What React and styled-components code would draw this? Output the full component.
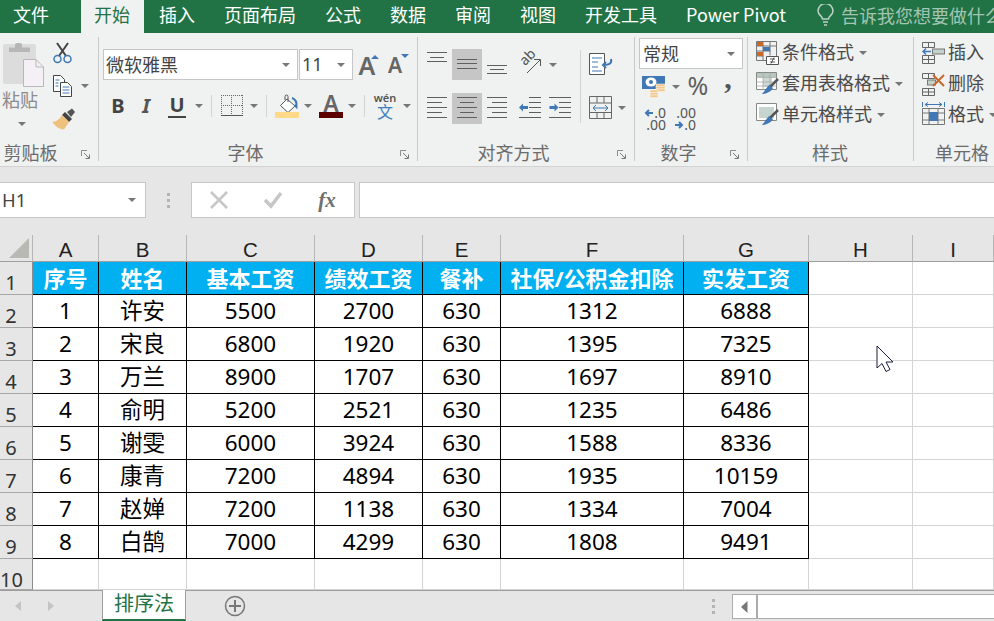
import React from "react";
import styled, { createGlobalStyle } from "styled-components";

const FONT = `"Noto Sans", "Noto Sans CJK SC", sans-serif`;
const CJK = `"Noto Sans CJK SC", "Noto Sans", sans-serif`;

const Global = createGlobalStyle`
  html, body { margin: 0; padding: 0; background: #fff; overflow: hidden; }
  * { box-sizing: border-box; }
`;

const Page = styled.div`
  position: relative; width: 994px; height: 621px; overflow: hidden;
  display: flex; flex-direction: column; font-family: ${FONT}; background: #fff;
`;

/* ---------- tab strip ---------- */
const TabStrip = styled.div`
  height: 33px; background: #217346; display: flex; gap: 1px; flex: none; overflow: hidden; white-space: nowrap;
`;
const Tab = styled.div`
  height: 33px; padding: 0 14px 3px; font: 18px/29px ${CJK}; color: #fff; flex: none;
`;
const FileTab = styled(Tab)` padding: 0 31px 3px 13px; `;
const ActiveTab = styled(Tab)` padding: 0 14px 3px 13px; background: #f0f1f1; color: #217346; `;
const TellMe = styled.div`
  display: flex; align-items: center; margin-left: 16px; gap: 7px; height: 30px; font: 18px/29px ${CJK}; color: #a3c5b1; flex: none;
`;

/* ---------- ribbon ---------- */
const Ribbon = styled.div`
  height: 134px; flex: none; padding-top: 4px; display: flex; background: #f0f1f1; border-bottom: 1px solid #d2d2d2; overflow: hidden;
`;
const Group = styled.div`
  width: ${(p) => p.$w}px; flex: ${(p) => (p.$w ? "none" : "1")}; height: 124px; display: flex; flex-direction: column;
  border-right: ${(p) => (p.$last ? "none" : "1px solid #c9c9c9")};
`;
const GroupBody = styled.div`
  flex: 1; min-height: 0; display: flex;
`;
const LabelRow = styled.div`
  height: 16px; display: grid; grid-template-columns: 1fr auto; align-items: start; padding-right: 7px;
`;
const GroupLabel = styled.div`
  font: 18px/14px ${CJK}; color: #6b6b6b; white-space: nowrap; text-align: ${(p) => p.$align || "center"};
  padding-left: ${(p) => p.$pl || 0}px; padding-right: ${(p) => p.$pr || 0}px;
`;
const LauncherWrap = styled.div` width: 10px; height: 10px; display: flex; margin-top: 5px; `;

const Caret = styled.span`
  display: block; flex: none; width: 0; height: 0;
  border-left: 4px solid transparent; border-right: 4px solid transparent; border-top: 4px solid #777;
  margin-left: ${(p) => p.$ml || 0}px;
`;
const Column = styled.div`
  display: flex; flex-direction: column; width: ${(p) => p.$w}px; padding-top: ${(p) => p.$pt || 0}px;
  padding-left: ${(p) => p.$pl || 0}px; gap: ${(p) => p.$gap || 0}px; flex: none;
`;
const Row = styled.div`
  display: flex; align-items: center; height: ${(p) => p.$h}px; margin-top: ${(p) => p.$mt || 0}px;
  padding-left: ${(p) => p.$pl || 0}px; flex: none;
`;
const Slot = styled.div`
  width: ${(p) => p.$w}px; height: ${(p) => p.$h || 24}px; margin-left: ${(p) => p.$ml || 0}px; flex: none;
  display: flex; align-items: center; justify-content: center; position: relative;
  background: ${(p) => (p.$on ? "#c6c6c6" : "transparent")};
`;
const PasteLabel = styled.div`
  font: 18px/16px ${CJK}; color: #8b8b8b; margin: 3px 0 0 -1px; height: 20px;
`;
const PasteCaret = styled.div` margin: 11px 0 0 15px; `;
const ToolRow = styled.div` display: flex; height: 22px; align-items: center; `;

const Combo = styled.div`
  height: ${(p) => p.$h}px; width: ${(p) => p.$w}px; background: #fff; border: 1px solid #c6c6c6; flex: none;
  display: flex; align-items: center; padding: 0 7px 0 ${(p) => p.$pl ?? 2}px; margin-left: ${(p) => p.$ml || 0}px;
  font: 18px/${(p) => p.$h - 6}px ${CJK}; color: #444;
`;
const ComboText = styled.span` flex: 1; white-space: nowrap; `;
const SizeText = styled(ComboText)` font-family: ${FONT}; `;

const LetterA = styled.span`
  font: 600 ${(p) => p.$s}px/24px "Noto Sans", sans-serif; color: #666;
`;
const GlyphB = styled.span` font: bold 20px/24px "Noto Sans", sans-serif; color: #444; `;
const GlyphI = styled.span` font: italic bold 20px/24px "Noto Sans", sans-serif; color: #555; `;
const GlyphU = styled.span`
  font: bold 20px/20px "Noto Sans", sans-serif; color: #444; border-bottom: 2px solid #444; height: 23px; padding: 0 1px;
`;
const Tip = styled.span`
  position: absolute; right: ${(p) => p.$r}px; top: ${(p) => p.$t}px; width: 0; height: 0;
  border-left: 4px solid transparent; border-right: 4px solid transparent;
  ${(p) => (p.$up ? "border-bottom: 4px solid #3f78b5;" : "border-top: 4px solid #3f78b5;")}
`;
const ColorA = styled.div`
  display: flex; flex-direction: column; align-items: center; width: 24px; height: 24px;
  font: 600 23px/18px "Noto Sans", sans-serif; color: #666;
`;
const ColorBar = styled.span` display: block; width: 24px; height: 6px; margin-top: auto; background: #5c0000; `;
const Wen = styled.div`
  display: flex; flex-direction: column; align-items: center; color: #555; font: 600 11px/11px "Noto Sans", sans-serif;
`;
const WenZi = styled.span` font: 16px/17px ${CJK}; color: #3f7fbf; `;
const Divider = styled.div`
  width: 1px; height: ${(p) => p.$h}px; background: #d3d3d3; margin-left: ${(p) => p.$ml || 0}px; margin-top: ${(p) => p.$mt || 0}px; flex: none;
`;
const AbText = styled.span`
  position: absolute; left: 4px; top: 0; font: 14px/16px "Noto Sans", sans-serif; color: #555; transform: rotate(-45deg);
`;
const Percent = styled.span` font: 25px/20px "Noto Sans", sans-serif; color: #5f5f5f; margin: -4px 0 0 -4px; `;
const Comma = styled.span` font: bold 30px/24px "Liberation Serif", serif; color: #555; margin-top: -18px; `;
const DecBtn = styled.div`
  width: 24px; display: flex; flex-direction: column; align-items: flex-end; margin-left: ${(p) => p.$ml || 0}px;
  font: 14px/12px "Noto Sans", sans-serif; color: #555; flex: none;
`;
const DecLine = styled.span` display: flex; align-items: center; gap: 0; height: 12px; `;
const StyleRow = styled.div`
  display: flex; align-items: center; height: 31px; padding-left: ${(p) => p.$pl}px; font: 18px/27px ${CJK}; color: #4a4a4a; white-space: nowrap;
`;
const StyleText = styled.span` margin: 0 0 2px 3px; `;

/* ---------- formula bar ---------- */
const FormulaBar = styled.div`
  height: 68px; flex: none; display: flex; padding-top: 15px; background: #e6e6e6; align-items: flex-start;
`;
const NameBox = styled.div`
  width: 146px; height: 36px; background: #fff; border: 1px solid #c6c6c6; border-left: none; flex: none;
  display: flex; align-items: center; padding: 0 9px 0 2px; font: 18.5px/34px "Noto Sans", sans-serif; color: #444;
`;
const NameText = styled.span` flex: 1; `;
const GripDots = styled.div`
  width: ${(p) => p.$w}px; height: ${(p) => p.$h}px; flex: none; display: flex; flex-direction: column; align-items: center; justify-content: center; gap: 3px;
  & > i { display: block; width: 3px; height: 3px; background: #b4b4b4; }
`;
const FxBox = styled.div`
  width: 164px; height: 36px; background: #fff; border: 1px solid #c6c6c6; flex: none; display: flex; align-items: center;
`;
const FxSlot = styled.div`
  width: 54px; height: 34px; flex: none; display: flex; align-items: center; justify-content: center;
`;
const FxText = styled.span` font: italic bold 21px/30px "Liberation Serif", serif; color: #707070; `;
const FormulaInput = styled.div`
  flex: 1; height: 36px; margin-left: 4px; background: #fff; border: 1px solid #c6c6c6; border-right: none;
`;

/* ---------- sheet ---------- */
const Sheet = styled.div`
  flex: none; height: 355px; display: grid;
  grid-template-columns: 33px 66px 88px 128px 108px 78px 183px 125px 104px 81px;
  grid-template-rows: 27px repeat(9, 33px) 31px; overflow: hidden;
`;
const Corner = styled.div`
  background: #e6e6e6; border-right: 1px solid #b6b6b6; border-bottom: 1px solid #9e9e9e;
  display: flex; align-items: flex-end; justify-content: flex-end; padding: 0 3px 3px 0;
`;
const ColHead = styled.div`
  background: #e6e6e6; border-right: 1px solid #b6b6b6; border-bottom: 1px solid #9e9e9e; padding-top: 3px;
  text-align: center; font: 20.5px/24px "Liberation Sans", sans-serif; color: #222;
`;
const RowHead = styled.div`
  background: #e6e6e6; border-right: 1px solid #8c8c8c; border-bottom: 1px solid #a8a8a8;
  padding: 9px 10px 0 0; text-align: center; font: 20px/23px "Noto Sans", sans-serif; color: #333; white-space: nowrap;
`;
const HeadCell = styled.div`
  background: #00b0f0; color: #fff; border-right: 1px solid #000; border-bottom: 1px solid #000;
  display: flex; align-items: center; justify-content: center; font: bold 22px/30px ${FONT}; white-space: nowrap;
`;
const DataCell = styled.div`
  border-right: 1px solid #000; border-bottom: 1px solid #000; background: #fff; padding-bottom: 1px;
  display: flex; align-items: center; justify-content: center; font: 22.500px/30px ${FONT}; color: #000;
`;
const EmptyCell = styled.div`
  background: #fff; border-right: 1px solid #d4d4d4; border-bottom: 1px solid #d4d4d4;
`;

/* ---------- sheet tabs ---------- */
const SheetBar = styled.div`
  flex: none; height: 31px; display: flex; align-items: flex-start; background: #e6e6e6; border-top: 1px solid #9e9e9e;
`;
const NavSlot = styled.div`
  width: ${(p) => p.$w}px; height: 30px; flex: none; display: flex; align-items: center; justify-content: center;
`;
const SheetTab = styled.div`
  width: 84px; height: 31px; margin-top: -1px; flex: none; background: #fff; text-align: center;
  border-left: 1px solid #9e9e9e; border-right: 1px solid #9e9e9e; border-bottom: 2px solid #217346;
  font: 20px/26px ${CJK}; color: #217346;
`;
const Spacer = styled.div` flex: 1; `;
const ScrollBtn = styled.div`
  width: 25px; height: 25px; margin-top: 3px; flex: none; background: #fff; border: 1px solid #ababab;
  display: flex; align-items: center; justify-content: center;
`;
const ScrollTrack = styled.div`
  width: 237px; height: 25px; margin-top: 3px; flex: none; background: #fff; border: 1px solid #ababab; border-right: none;
`;
const Cursor = styled.svg` position: absolute; left: 876px; top: 345px; `;

/* ---------- icons ---------- */
const Launcher = () => (
  <LauncherWrap>
    <svg width="10" height="10" viewBox="0 0 10 10" fill="none">
      <path d="M.5 6V.5H6" stroke="#8c8c8c" />
      <path d="M3 3l5 5M8.5 4.5v4h-4" stroke="#777" />
    </svg>
  </LauncherWrap>
);
const PasteIcon = () => (
  <svg width="41" height="46" viewBox="0 0 41 46">
    <rect x="0" y="2" width="33" height="40" rx="2" fill="#dcdcdc" />
    <path d="M6 10V5.5h6V3a2 2 0 0 1 2-2h3a2 2 0 0 1 2 2v2.500h8V10z" fill="#b7b7b7" />
    <path d="M20.500 17.500H33L40.500 25v19.500h-20z" fill="#f5f0f6" stroke="#b8b8b8" />
    <path d="M33 17.500V25h7.500" fill="none" stroke="#b8b8b8" />
  </svg>
);
const CutIcon = () => (
  <svg width="22" height="22" viewBox="0 0 22 22" fill="none">
    <path d="M5 1l9 13M16 1L7 14" stroke="#444" strokeWidth="2" />
    <circle cx="5.500" cy="17" r="3.500" stroke="#3f78b5" strokeWidth="1.500" />
    <circle cx="15.500" cy="17" r="3.500" stroke="#3f78b5" strokeWidth="1.500" />
  </svg>
);
const CopyIcon = () => (
  <svg width="22" height="22" viewBox="0 0 22 22" fill="none">
    <path d="M1.500.500h7l4 4v12h-11z" fill="#fff" stroke="#444" />
    <path d="M8.500 7.500h7l4 4v10h-11z" fill="#fff" stroke="#444" />
    <path d="M3.500 5h4M3.500 8h3M3.500 11h3M10.500 12h7M10.500 15h7M10.500 18h7" stroke="#3f78b5" />
  </svg>
);
const BrushIcon = () => (
  <svg width="24" height="22" viewBox="0 0 24 22">
    <path d="M15 4l5-3.500 3 3.500-4 5z" fill="#555" />
    <path d="M13 4l7 7-3 3-7-7z" fill="#444" />
    <path d="M10 7l7 7-5 7.500c-4 0-9-3-12-8 4 1 7-2 10-6.500z" fill="#eec17e" />
  </svg>
);
const BordersIcon = () => (
  <svg width="22" height="22" viewBox="0 0 22 22" fill="none">
    <path d="M0 .5h22M0 10.500h22M.5 0v20M10.500 0v20M21.500 0v20" stroke="#666" strokeDasharray="1 1" />
    <path d="M0 20.500h22" stroke="#555" />
  </svg>
);
const FillIcon = () => (
  <svg width="24" height="24" viewBox="0 0 24 24" fill="none">
    <path d="M12 5l8 7-7 6.500-7.500-7z" fill="#fff" stroke="#555" />
    <path d="M10 6V2.500a1.500 1.500 0 0 1 3 0V8" stroke="#555" />
    <path d="M17 4c3 1 5 4 4.500 9l-2-2" stroke="#3f78b5" strokeWidth="2" />
    <rect x="0" y="18" width="24" height="6" fill="#ffd98a" />
  </svg>
);
const Lines = ({ lines, arrow }) => (
  <svg width="30" height="31" viewBox="0 0 30 31" fill="none">
    {lines.map(([a, b, y], i) => (
      <path key={i} d={`M${a} ${y + 0.5}H${b}`} stroke="#5f5f5f" />
    ))}
    {arrow === "left" && <path d="M4 14.500l4-4v2.500h5v3H8v2.500z" fill="#3f78b5" />}
    {arrow === "right" && <path d="M13.500 14.500l-4-4v2.500h-5v3h5v2.500z" fill="#3f78b5" />}
  </svg>
);
const rowLeft = [[5, 25, 4], [5, 20, 9], [5, 25, 14], [5, 20, 19], [5, 25, 24]];
const rowCenter = [[5, 25, 4], [8, 22, 9], [5, 25, 14], [8, 22, 19], [5, 25, 24]];
const rowRight = [[5, 25, 4], [10, 25, 9], [5, 25, 14], [10, 25, 19], [5, 25, 24]];
const outdent = [[14, 26, 4], [14, 26, 9], [14, 26, 14], [14, 26, 19], [4, 26, 24]];
const indent = [[4, 26, 4], [14, 26, 9], [14, 26, 14], [14, 26, 19], [4, 26, 24]];

const OrientArrow = () => (
  <svg width="30" height="31" viewBox="0 0 30 31" fill="none">
    <path d="M12 24L25 11M19 10.500h6.500V17" stroke="#555" />
  </svg>
);
const WrapIcon = () => (
  <svg width="24" height="24" viewBox="0 0 24 24" fill="none">
    <path d="M.5.500h15v21H.5z" fill="#fff" stroke="#555" />
    <path d="M3 5h10M3 9h6M3 14h6M3 18h10" stroke="#3f78b5" />
    <path d="M22 6c1 4-1 6-8 6M17 9l-3 3 3 3" stroke="#3f78b5" strokeWidth="2" />
  </svg>
);
const MergeIcon = () => (
  <svg width="23" height="24" viewBox="0 0 23 24" fill="none">
    <path d="M.5.500h22v22H.5zM.5 7h22M.5 16.500h22M8 .5V7M15 .5V7M8 16.500v6M15 16.500v6" stroke="#666" />
    <path d="M4 12h15M7 9l-3 3 3 3M16 9l3 3-3 3" stroke="#3f78b5" />
  </svg>
);
const MoneyIcon = () => (
  <svg width="24" height="24" viewBox="0 0 24 24">
    <rect x="0" y="1" width="23" height="13" fill="#3f78b5" />
    <ellipse cx="9" cy="7" rx="5.500" ry="4.500" fill="#fff" />
    <circle cx="9" cy="7" r="2" fill="#3f78b5" />
    <g fill="#f1c88a" stroke="#f7f7f7" strokeWidth=".5">
      <rect x="14" y="9" width="9" height="2.500" />
      <rect x="14" y="11.500" width="9" height="2.500" />
      <rect x="14" y="14" width="9" height="2.500" />
      <rect x="8" y="15" width="8" height="2.500" />
      <rect x="8" y="17.500" width="8" height="2.500" />
      <rect x="8" y="20" width="8" height="2.500" />
    </g>
  </svg>
);
const DecArrow = ({ dir }) => (
  <svg width="10" height="10" viewBox="0 0 10 10" fill="none">
    <path d={dir === "left" ? "M9 5H2M5 2L2 5l3 3" : "M1 5h7M5 2l3 3-3 3"} stroke="#3f78b5" strokeWidth="2" />
  </svg>
);
const CondIcon = () => (
  <svg width="23" height="24" viewBox="0 0 23 24" fill="none">
    <path d="M.5.500h20v19H.5zM7 .5v19M14 .5v14M.5 5h20M.5 10h14M.5 15h7" stroke="#777" />
    <rect x="1" y="1" width="6" height="4" fill="#c8682b" />
    <rect x="7" y="6" width="7" height="4" fill="#3f78b5" />
    <rect x="1" y="11" width="6" height="4" fill="#c8682b" />
    <path d="M10.500 15.500h12v8h-12z" fill="#fff" stroke="#555" />
    <path d="M14 18h5M14 21h5M18 16.500l-3 6" stroke="#333" strokeWidth=".8" />
  </svg>
);
const TableStyleIcon = () => (
  <svg width="23" height="24" viewBox="0 0 23 24" fill="none">
    <path d="M.5.500h20v17H.5z" stroke="#888" fill="#fff" />
    <rect x="1" y="1" width="19" height="4" fill="#b5c7bf" />
    <rect x="7" y="5" width="9" height="10" fill="#cbdad3" />
    <path d="M7 .5v17M14 .5v17M.5 5.500h20M.5 10h20M.5 14h20" stroke="#aaa" strokeWidth=".8" />
    <path d="M22 7l-8 8" stroke="#555" strokeWidth="2.500" />
    <path d="M13 13l4 3c-2 4-8 6-11 6 2-2 4-6 7-9z" fill="#3f78b5" />
  </svg>
);
const CellStyleIcon = () => (
  <svg width="23" height="24" viewBox="0 0 23 24" fill="none">
    <path d="M.5.500h20v17H.5z" stroke="#888" fill="#fff" />
    <rect x="3" y="4" width="15" height="11" fill="#c6d6cf" />
    <path d="M22 7l-8 8" stroke="#555" strokeWidth="2.500" />
    <path d="M13 13l4 3c-2 4-8 6-11 6 2-2 4-6 7-9z" fill="#3f78b5" />
  </svg>
);
const InsertIcon = () => (
  <svg width="23" height="24" viewBox="0 0 23 24" fill="none">
    <path d="M.5 1.500h12v5H.5zM6.500 1.500v5M.5 14.500h12v8H.5zM.5 18.500h12M6.500 14.500v8" stroke="#666" />
    <rect x="10.500" y="8" width="12" height="5" fill="#c3d3cc" stroke="#777" />
    <path d="M9 10.500H1M4 7.500l-3 3 3 3" stroke="#3f78b5" strokeWidth="1.500" />
  </svg>
);
const DeleteIcon = () => (
  <svg width="23" height="24" viewBox="0 0 23 24" fill="none">
    <path d="M.5 1.500h12v5H.5zM6.500 1.500v5M.5 16.500h12v7H.5zM.5 20h12M6.500 16.500v7" stroke="#666" />
    <rect x="5.500" y="8" width="8" height="5" fill="#c3d3cc" stroke="#777" />
    <path d="M11 3l11 11M22 3L11 14" stroke="#c8682b" strokeWidth="2" />
  </svg>
);
const FormatIcon = () => (
  <svg width="23" height="26" viewBox="0 0 23 26" fill="none">
    <path d="M.5 0v5M22.500 0v5M3 2.500h17M6 .5l-3 2 3 2M17 .5l3 2-3 2" stroke="#3f78b5" />
    <path d="M.5 6.500h22v16H.5zM7 6.500v16M16 6.500v16M.5 11h22M.5 18h22" stroke="#777" />
    <rect x="7" y="10" width="9" height="9" fill="#3f78b5" />
  </svg>
);
const Bulb = () => (
  <svg width="17" height="22" viewBox="0 0 17 22" fill="none" stroke="#b9d3c4" strokeWidth="1.500">
    <path d="M5.500 15c0-3-4.500-4-4.500-8a7.500 7.500 0 0 1 15 0c0 4-4.500 5-4.500 8z" />
    <path d="M6 18h5M7 21h3" />
  </svg>
);

const data = [
  ["1", "许安", "5500", "2700", "630", "1312", "6888"],
  ["2", "宋良", "6800", "1920", "630", "1395", "7325"],
  ["3", "万兰", "8900", "1707", "630", "1697", "8910"],
  ["4", "俞明", "5200", "2521", "630", "1235", "6486"],
  ["5", "谢雯", "6000", "3924", "630", "1588", "8336"],
  ["6", "康青", "7200", "4894", "630", "1935", "10159"],
  ["7", "赵婵", "7200", "1138", "630", "1334", "7004"],
  ["8", "白鹄", "7000", "4299", "630", "1808", "9491"],
];
const heads = ["序号", "姓名", "基本工资", "绩效工资", "餐补", "社保/公积金扣除", "实发工资"];
const cols = ["A", "B", "C", "D", "E", "F", "G", "H", "I"];

export default function App() {
  return (
    <Page>
      <Global />
      <TabStrip>
        <FileTab>文件</FileTab>
        <ActiveTab>开始</ActiveTab>
        <Tab>插入</Tab>
        <Tab>页面布局</Tab>
        <Tab>公式</Tab>
        <Tab>数据</Tab>
        <Tab>审阅</Tab>
        <Tab>视图</Tab>
        <Tab>开发工具</Tab>
        <Tab>Power Pivot</Tab>
        <TellMe>
          <Bulb />
          告诉我您想要做什么
        </TellMe>
      </TabStrip>

      <Ribbon>
        <Group $w={99}>
          <GroupBody>
            <Column $w={52} $pl={3} $pt={5}>
              <PasteIcon />
              <PasteLabel>粘贴</PasteLabel>
              <PasteCaret><Caret /></PasteCaret>
            </Column>
            <Column $w={46} $pt={5} $gap={11}>
              <ToolRow><CutIcon /></ToolRow>
              <ToolRow><CopyIcon /><Caret $ml={7} /></ToolRow>
              <ToolRow><BrushIcon /></ToolRow>
            </Column>
          </GroupBody>
          <LabelRow>
            <GroupLabel $pr={20}>剪贴板</GroupLabel>
            <Launcher />
          </LabelRow>
        </Group>

        <Group $w={319}>
          <GroupBody>
            <Column $w={318} $pt={12}>
              <Row $h={31} $pl={4}>
                <Combo $w={195} $h={31}><ComboText>微软雅黑</ComboText><Caret /></Combo>
                <Combo $w={54} $h={31} $ml={1}><SizeText>11</SizeText><Caret /></Combo>
                <Slot $w={24} $ml={2}>
                  <LetterA $s={25}>A</LetterA><Tip $up $r={0} $t={2} />
                </Slot>
                <Slot $w={22} $ml={5}>
                  <LetterA $s={21}>A</LetterA><Tip $r={-3} $t={1} />
                </Slot>
              </Row>
              <Row $h={24} $mt={14} $pl={6}>
                <Slot $w={26}><GlyphB>B</GlyphB></Slot>
                <Slot $w={26} $ml={2}><GlyphI>I</GlyphI></Slot>
                <Slot $w={26} $ml={5}><GlyphU>U</GlyphU></Slot>
                <Caret $ml={5} />
                <Divider $h={22} $ml={8} />
                <Slot $w={22} $ml={9}><BordersIcon /></Slot>
                <Caret $ml={7} />
                <Divider $h={22} $ml={8} />
                <Slot $w={24} $ml={8}><FillIcon /></Slot>
                <Caret $ml={5} />
                <Slot $w={24} $ml={7}>
                  <ColorA>A<ColorBar /></ColorA>
                </Slot>
                <Caret $ml={5} />
                <Divider $h={22} $ml={8} />
                <Slot $w={24} $ml={8}>
                  <Wen>wén<WenZi>文</WenZi></Wen>
                </Slot>
                <Caret $ml={6} />
              </Row>
            </Column>
          </GroupBody>
          <LabelRow>
            <GroupLabel $pr={8}>字体</GroupLabel>
            <Launcher />
          </LabelRow>
        </Group>

        <Group $w={217}>
          <GroupBody>
            <Column $w={162} $pt={12} $pl={4}>
              <Row $h={31}>
                <Slot $w={30} $h={31}><Lines lines={[[5, 25, 3], [8, 22, 8], [5, 25, 12]]} /></Slot>
                <Slot $w={30} $h={31} $on><Lines lines={[[5, 25, 10], [5, 25, 14], [5, 25, 19]]} /></Slot>
                <Slot $w={30} $h={31}><Lines lines={[[5, 25, 16], [8, 22, 20], [5, 25, 24]]} /></Slot>
                <Slot $w={30} $h={31} $ml={3}><AbText>ab</AbText><OrientArrow /></Slot>
                <Caret $ml={4} />
              </Row>
              <Row $h={31} $mt={13}>
                <Slot $w={30} $h={31}><Lines lines={rowLeft} /></Slot>
                <Slot $w={30} $h={31} $on><Lines lines={rowCenter} /></Slot>
                <Slot $w={30} $h={31}><Lines lines={rowRight} /></Slot>
                <Slot $w={30} $h={31} $ml={3}><Lines lines={outdent} arrow="left" /></Slot>
                <Slot $w={30} $h={31}><Lines lines={indent} arrow="right" /></Slot>
              </Row>
            </Column>
            <Divider $h={73} $mt={13} />
            <Column $w={50} $pt={16} $pl={8}>
              <Row $h={24}><Slot $w={24}><WrapIcon /></Slot></Row>
              <Row $h={24} $mt={19}>
                <Slot $w={23}><MergeIcon /></Slot>
                <Caret $ml={6} />
              </Row>
            </Column>
          </GroupBody>
          <LabelRow>
            <GroupLabel $pr={8}>对齐方式</GroupLabel>
            <Launcher />
          </LabelRow>
        </Group>

        <Group $w={113}>
          <GroupBody>
            <Column $w={112} $pt={1} $pl={4}>
              <Combo $w={104} $h={31} $pl={3}><ComboText>常规</ComboText><Caret /></Combo>
              <Row $h={24} $mt={6} $pl={3}>
                <Slot $w={24}><MoneyIcon /></Slot>
                <Caret $ml={6} />
                <Slot $w={26} $ml={7}><Percent>%</Percent></Slot>
                <Slot $w={12} $ml={9}><Comma>,</Comma></Slot>
              </Row>
              <Row $h={24} $mt={8} $pl={3}>
                <DecBtn>
                  <DecLine><DecArrow dir="left" />.0</DecLine>
                  <DecLine>.00</DecLine>
                </DecBtn>
                <DecBtn $ml={6}>
                  <DecLine>.00</DecLine>
                  <DecLine><DecArrow dir="right" />.0</DecLine>
                </DecBtn>
              </Row>
            </Column>
          </GroupBody>
          <LabelRow>
            <GroupLabel $pr={8}>数字</GroupLabel>
            <Launcher />
          </LabelRow>
        </Group>

        <Group $w={166}>
          <GroupBody>
            <Column $w={165}>
              <StyleRow $pl={8}><CondIcon /><StyleText>条件格式</StyleText><Caret $ml={5} /></StyleRow>
              <StyleRow $pl={8}><TableStyleIcon /><StyleText>套用表格格式</StyleText><Caret $ml={5} /></StyleRow>
              <StyleRow $pl={8}><CellStyleIcon /><StyleText>单元格样式</StyleText><Caret $ml={5} /></StyleRow>
            </Column>
          </GroupBody>
          <LabelRow>
            <GroupLabel $pl={6}>样式</GroupLabel>
            <span />
          </LabelRow>
        </Group>

        <Group $last>
          <GroupBody>
            <Column $w={100}>
              <StyleRow $pl={8}><InsertIcon /><StyleText>插入</StyleText></StyleRow>
              <StyleRow $pl={8}><DeleteIcon /><StyleText>删除</StyleText></StyleRow>
              <StyleRow $pl={8}><FormatIcon /><StyleText>格式</StyleText><Caret $ml={5} /></StyleRow>
            </Column>
          </GroupBody>
          <LabelRow>
            <GroupLabel $align="left" $pl={21}>单元格</GroupLabel>
            <span />
          </LabelRow>
        </Group>
      </Ribbon>

      <FormulaBar>
        <NameBox><NameText>H1</NameText><Caret /></NameBox>
        <GripDots $w={45} $h={36}><i /><i /><i /></GripDots>
        <FxBox>
          <FxSlot>
            <svg width="20" height="20" viewBox="0 0 20 20" fill="none"><path d="M2 2l16 16M18 2L2 18" stroke="#c6c6c6" strokeWidth="2.500" /></svg>
          </FxSlot>
          <FxSlot>
            <svg width="20" height="18" viewBox="0 0 20 18" fill="none"><path d="M2 9l6 6L18 2" stroke="#c6c6c6" strokeWidth="3.500" /></svg>
          </FxSlot>
          <FxSlot><FxText>fx</FxText></FxSlot>
        </FxBox>
        <FormulaInput />
      </FormulaBar>

      <Sheet>
        <Corner>
          <svg width="20" height="20" viewBox="0 0 20 20"><path d="M20 0v20H0z" fill="#b9b9b3" /></svg>
        </Corner>
        {cols.map((c) => <ColHead key={c}>{c}</ColHead>)}

        <RowHead>1</RowHead>
        {heads.map((h) => <HeadCell key={h}>{h}</HeadCell>)}
        <EmptyCell /><EmptyCell />

        {data.map((r, i) => (
          <React.Fragment key={i}>
            <RowHead>{i + 2}</RowHead>
            {r.map((v, j) => <DataCell key={j}>{v}</DataCell>)}
            <EmptyCell /><EmptyCell />
          </React.Fragment>
        ))}

        <RowHead>10</RowHead>
        {cols.map((c) => <EmptyCell key={c} />)}
      </Sheet>

      <SheetBar>
        <NavSlot $w={35}>
          <svg width="8" height="12" viewBox="0 0 8 12"><path d="M7 1v10L1 6z" fill="#c4c4c4" /></svg>
        </NavSlot>
        <NavSlot $w={32}>
          <svg width="8" height="12" viewBox="0 0 8 12"><path d="M1 1v10l6-5z" fill="#c4c4c4" /></svg>
        </NavSlot>
        <NavSlot $w={35} />
        <SheetTab>排序法</SheetTab>
        <NavSlot $w={98}>
          <svg width="22" height="22" viewBox="0 0 22 22" fill="none">
            <circle cx="11" cy="11" r="9.500" stroke="#777" strokeWidth="1.500" />
            <path d="M11 5v12M5 11h12" stroke="#777" strokeWidth="2" />
          </svg>
        </NavSlot>
        <Spacer />
        <GripDots $w={17} $h={30}><i /><i /><i /></GripDots>
        <NavSlot $w={10} />
        <ScrollBtn>
          <svg width="7" height="12" viewBox="0 0 7 12"><path d="M6.500 0v12L0 6z" fill="#777" /></svg>
        </ScrollBtn>
        <ScrollTrack />
      </SheetBar>

      <Cursor width="19" height="28" viewBox="0 0 19 28">
        <path d="M1 1v22l5-4.500 4 8 4-2-4-7.500h7z" fill="#fff" stroke="#1c1c3c" strokeWidth="1" />
      </Cursor>
    </Page>
  );
}
